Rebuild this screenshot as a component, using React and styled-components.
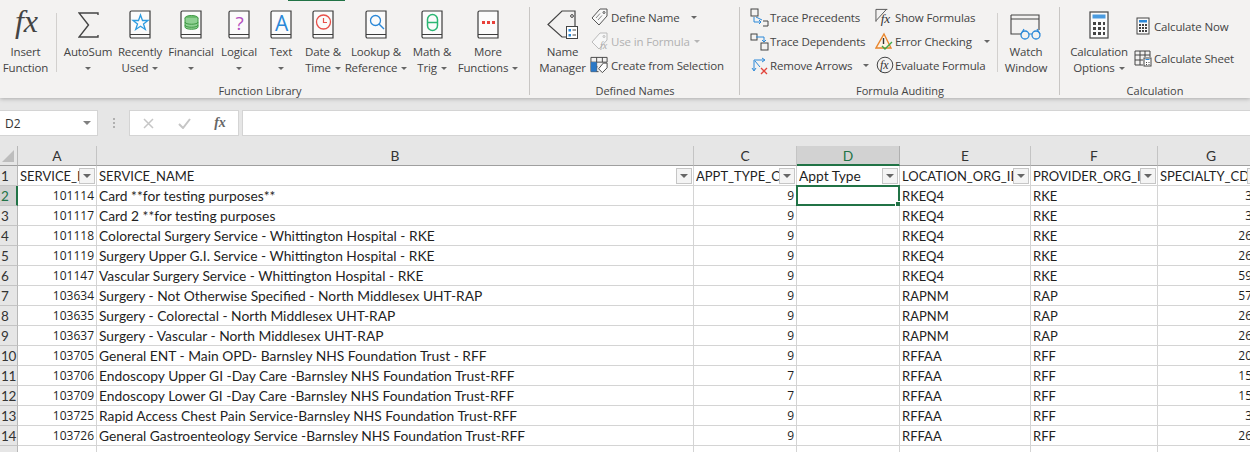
import React from 'react';
import styled, { createGlobalStyle } from 'styled-components';

const GlobalStyle = createGlobalStyle`
	html, body {
		margin: 0;
		padding: 0;
		height: 452px;
		overflow: hidden;
		background: #e6e6e6;
	}
`;

const uiFont = `'Open Sans', 'Noto Sans', 'Liberation Sans', sans-serif`;
const cellFont = `Lato, 'Open Sans', 'Liberation Sans', sans-serif`;

const columns = [
	{ name: 'A', width: 79, label: 'SERVICE_ID' },
	{ name: 'B', width: 597, label: 'SERVICE_NAME' },
	{ name: 'C', width: 103, label: 'APPT_TYPE_CD' },
	{ name: 'D', width: 103, label: 'Appt Type', selected: true },
	{ name: 'E', width: 131, label: 'LOCATION_ORG_ID' },
	{ name: 'F', width: 127, label: 'PROVIDER_ORG_ID' },
	{ name: 'G', width: 107, label: 'SPECIALTY_CD' },
];

const rows = [
	['101114', 'Card **for testing purposes**', '9', 'RKEQ4', 'RKE', '3'],
	['101117', 'Card 2 **for testing purposes', '9', 'RKEQ4', 'RKE', '3'],
	['101118', 'Colorectal Surgery Service - Whittington Hospital - RKE', '9', 'RKEQ4', 'RKE', '26'],
	['101119', 'Surgery Upper G.I. Service - Whittington Hospital - RKE', '9', 'RKEQ4', 'RKE', '26'],
	['101147', 'Vascular Surgery Service - Whittington Hospital - RKE', '9', 'RKEQ4', 'RKE', '59'],
	['103634', 'Surgery - Not Otherwise Specified - North Middlesex UHT-RAP', '9', 'RAPNM', 'RAP', '57'],
	['103635', 'Surgery - Colorectal - North Middlesex UHT-RAP', '9', 'RAPNM', 'RAP', '26'],
	['103637', 'Surgery - Vascular - North Middlesex UHT-RAP', '9', 'RAPNM', 'RAP', '26'],
	['103705', 'General ENT - Main OPD- Barnsley NHS Foundation Trust - RFF', '9', 'RFFAA', 'RFF', '20'],
	['103706', 'Endoscopy Upper GI -Day Care -Barnsley NHS Foundation Trust-RFF', '7', 'RFFAA', 'RFF', '15'],
	['103709', 'Endoscopy Lower GI -Day Care -Barnsley NHS Foundation Trust-RFF', '7', 'RFFAA', 'RFF', '15'],
	['103725', 'Rapid Access Chest Pain Service-Barnsley NHS Foundation Trust-RFF', '9', 'RFFAA', 'RFF', '3'],
	['103726', 'General Gastroenteology Service -Barnsley NHS Foundation Trust-RFF', '9', 'RFFAA', 'RFF', '26'],
];

const Page = styled.div`
	width: 1250px;
	height: 452px;
	overflow: hidden;
	background: #e6e6e6;
	font-family: ${uiFont};
`;

const Ribbon = styled.div`
	position: relative;
	display: flex;
	height: 98px;
	background: #f3f2f1;
	box-shadow: 0 1px 4px rgba(0, 0, 0, 0.25);
`;

const TabMark = styled.span`
	position: absolute;
	left: 288px;
	top: 0;
	width: 57px;
	height: 1px;
	background: #217346;
`;

const Group = styled.section`
	position: relative;
	display: flex;
	flex-direction: column;
	flex: none;
	width: ${(p) => p.$w}px;
	height: 95px;
	margin-top: 3px;
	box-sizing: border-box;
	&::after {
		content: '';
		display: ${(p) => (p.$last ? 'none' : 'block')};
		position: absolute;
		right: 0;
		top: 4px;
		bottom: 3px;
		width: 1px;
		background: #c8c6c4;
	}
`;

const GroupBody = styled.div`
	display: flex;
	height: 80px;
	padding-left: ${(p) => p.$pad || 0}px;
`;

const GroupLabel = styled.div`
	text-align: center;
	font-size: 11px;
	line-height: 15px;
	color: #444;
	padding-right: ${(p) => p.$shift || 0}px;
`;

const Big = styled.div`
	flex: none;
	width: ${(p) => p.$w}px;
	display: flex;
	flex-direction: column;
	align-items: center;
	color: #444;
	font-size: 11.5px;
	line-height: 16px;
	letter-spacing: -0.15px;
	text-align: center;
	white-space: nowrap;
`;

const BigIcon = styled.div`
	height: 36px;
	margin-bottom: 5px;
	display: flex;
	align-items: flex-end;
	justify-content: center;
	svg {
		margin-bottom: ${(p) => -(p.$drop || 0)}px;
	}
`;

const Caret = styled.i`
	display: inline-block;
	width: 0;
	height: 0;
	border-left: ${(p) => (p.$big ? 4 : 3)}px solid transparent;
	border-right: ${(p) => (p.$big ? 4 : 3)}px solid transparent;
	border-top: ${(p) => (p.$big ? 4 : 3)}px solid ${(p) => (p.$off ? '#b5b5b5' : p.$big ? '#808080' : '#666')};
	vertical-align: middle;
	margin-left: ${(p) => p.$gap ?? 4}px;
`;

const Divider = styled.div`
	flex: none;
	width: 1px;
	height: 59px;
	margin: 10px ${(p) => p.$right}px 0 ${(p) => p.$left}px;
	background: #d2d0ce;
`;

const SmallColumn = styled.div`
	flex: none;
	width: ${(p) => p.$w}px;
	display: flex;
	flex-direction: column;
	padding-top: ${(p) => p.$top ?? 2}px;
	padding-left: ${(p) => p.$left ?? 0}px;
	box-sizing: border-box;
	gap: ${(p) => p.$gap ?? 0}px;
`;

const SmallButton = styled.div`
	display: flex;
	align-items: center;
	height: 24px;
	gap: ${(p) => p.$gap ?? 1}px;
	font-size: 11.5px;
	letter-spacing: -0.15px;
	color: ${(p) => (p.$off ? '#b1b1b1' : '#444')};
	white-space: nowrap;
`;

const SmallIcon = styled.span`
	flex: none;
	display: flex;
	justify-content: center;
	width: 19px;
`;

const FormulaBar = styled.div`
	display: flex;
	align-items: center;
	height: 26px;
	margin-top: 12px;
`;

const NameBox = styled.div`
	flex: none;
	width: 98px;
	height: 26px;
	box-sizing: border-box;
	display: flex;
	align-items: center;
	justify-content: space-between;
	padding: 0 6px 0 5px;
	background: #fff;
	border: 1px solid #d4d4d4;
	border-left: none;
	font-size: 12px;
	color: #333;
`;

const Dots = styled.div`
	flex: none;
	width: 31px;
	display: flex;
	flex-direction: column;
	align-items: center;
	gap: 2px;
	span {
		width: 2px;
		height: 2px;
		background: #b0b0b0;
	}
`;

const BarButtons = styled.div`
	flex: none;
	width: 110px;
	height: 26px;
	box-sizing: border-box;
	display: flex;
	align-items: center;
	background: #fff;
	border: 1px solid #d4d4d4;
	margin-right: 3px;
`;

const BarSlot = styled.span`
	flex: 1;
	display: flex;
	justify-content: center;
	color: ${(p) => p.$color || '#c6c6c6'};
	font-family: 'Liberation Serif', serif;
	font-style: italic;
	font-weight: bold;
	font-size: 14px;
`;

const FormulaInput = styled.div`
	flex: 1;
	height: 26px;
	box-sizing: border-box;
	background: #fff;
	border: 1px solid #d4d4d4;
	border-right: none;
`;

const Sheet = styled.div`
	display: grid;
	grid-template-columns: 18px ${columns.map((c) => `${c.width}px`).join(' ')};
	grid-auto-rows: 20px;
	margin-top: 10px;
	background: #fff;
	font-family: ${cellFont};
	font-size: 13.8px;
	color: #1f1f1f;
`;

const Corner = styled.div`
	position: relative;
	background: #e6e6e6;
	border-right: 1px solid #b8b8b8;
	border-bottom: 1px solid #9f9f9f;
	box-sizing: border-box;
	&::after {
		content: '';
		position: absolute;
		right: 3px;
		bottom: 3px;
		border-style: solid;
		border-width: 0 0 12px 12px;
		border-color: transparent transparent #bdbdbd transparent;
	}
`;

const ColHead = styled.div`
	display: flex;
	align-items: center;
	justify-content: center;
	box-sizing: border-box;
	background: ${(p) => (p.$on ? '#d2d2d2' : '#e6e6e6')};
	color: ${(p) => (p.$on ? '#217346' : '#333')};
	border-right: 1px solid ${(p) => (p.$on ? '#b0b0b0' : '#c4c4c4')};
	border-bottom: ${(p) => (p.$on ? '2px solid #217346' : '1px solid #9f9f9f')};
`;

const RowHead = styled.div`
	display: flex;
	align-items: center;
	padding: 1px 0 0 1px;
	box-sizing: border-box;
	font-size: 13.5px;
	letter-spacing: -0.3px;
	background: ${(p) => (p.$on ? '#d2d2d2' : '#e6e6e6')};
	color: ${(p) => (p.$on ? '#217346' : '#333')};
	border-right: ${(p) => (p.$on ? '2px solid #217346' : '1px solid #b8b8b8')};
	border-bottom: 1px solid #c4c4c4;
`;

const Cell = styled.div`
	position: relative;
	display: flex;
	align-items: center;
	justify-content: ${(p) => (p.$num ? 'flex-end' : 'flex-start')};
	box-sizing: border-box;
	padding: 0 ${(p) => p.$inset ?? 2}px 0 2px;
	white-space: nowrap;
	font-family: ${(p) => (p.$num ? uiFont : 'inherit')};
	font-size: ${(p) => (p.$num ? '12px' : p.$caps ? '13px' : 'inherit')};
	border-right: 1px solid #d4d4d4;
	border-bottom: 1px solid #d4d4d4;
`;

const HeaderText = styled.span`
	display: block;
	overflow: hidden;
	flex: 1;
	min-width: 0;
`;

const FilterBtn = styled.span`
	flex: none;
	width: 16px;
	height: 16px;
	box-sizing: border-box;
	display: flex;
	align-items: center;
	justify-content: center;
	margin-right: -1px;
	background: #f4f4f4;
	border: 1px solid #c6c6c6;
	&::after {
		content: '';
		border-left: 4px solid transparent;
		border-right: 4px solid transparent;
		border-top: 4px solid #666;
	}
`;

const Selection = styled.div`
	position: absolute;
	left: -1px;
	top: -1px;
	right: -1px;
	bottom: -1px;
	border: 2px solid #217346;
	pointer-events: none;
	&::after {
		content: '';
		position: absolute;
		right: -3px;
		bottom: -3px;
		width: 4px;
		height: 4px;
		background: #217346;
		border: 1px solid #fff;
	}
`;

const Book = ({ children }) => (
	<svg width="22" height="29" viewBox="0 0 22 29" fill="none">
		<path d="M2.500 1h18.500v27H2.500A1.500 1.500 0 0 1 1 26.500V2.500A1.500 1.500 0 0 1 2.500 1z" fill="#fbfbfb" stroke="#3c3c3c" strokeWidth="1.200" />
		<path d="M1 24.500h20" stroke="#3c3c3c" strokeWidth="1" />
		{children}
	</svg>
);

const FxIcon = () => (
	<svg width="34" height="30" viewBox="0 0 34 30">
		<text x="6" y="23" fontFamily="'Liberation Serif', serif" fontStyle="italic" fontSize="32" fill="#444">fx</text>
	</svg>
);

const SigmaIcon = () => (
	<svg width="21" height="27" viewBox="0 0 21 27" fill="none">
		<path d="M20 3V1H1l9.500 12L1 25h19v-2" stroke="#444" strokeWidth="1.400" />
	</svg>
);

const NameTag = () => (
	<svg width="31" height="29" viewBox="0 0 31 29" fill="none">
		<path d="M19 27h-4L1 14.500 15 1h13v15" stroke="#444" strokeWidth="1.200" />
		<circle cx="25" cy="6" r="1.400" stroke="#444" />
		<rect x="19.500" y="16.500" width="11" height="12" fill="#fff" stroke="#444" />
		<path d="M21.500 19h2.500v2.500h-2.500zM21.500 24h2.500v2.500h-2.500z" fill="#2b88d8" />
		<path d="M25.500 20h3.500M25.500 25h3.500" stroke="#444" />
	</svg>
);

const TagSmall = ({ off }) => (
	<svg width="18" height="18" viewBox="0 0 18 18" fill="none">
		<path d="M1 10L9 1h7v7l-8 9z" stroke={off ? '#bbb' : '#555'} fill="#f7f7f7" />
		<circle cx="13" cy="4.500" r="1" stroke={off ? '#bbb' : '#555'} />
		{off ? (
			<text x="9" y="17" fontFamily="'Liberation Serif', serif" fontStyle="italic" fontSize="10" fill="#aaa">fx</text>
		) : (
			<path d="M5 10l4-4.500M7 12l4-4.500" stroke="#888" />
		)}
	</svg>
);

const CreateSel = () => (
	<svg width="20" height="18" viewBox="0 0 20 18" fill="none">
		<path d="M1 1h17v5M1 1v15h8M1 6h17M7 1v15M13 1v5M1 11h7" stroke="#444" />
		<rect x="1" y="6" width="6" height="10" fill="#2b78c6" />
		<path d="M9 13l5-6h4v5l-5 5z" fill="#fff" stroke="#444" />
	</svg>
);

const TraceIcon = ({ dep }) => (
	<svg width="19" height="19" viewBox="0 0 19 19" fill="none">
		{dep ? (
			<>
				<rect x="1" y="2" width="6" height="6" stroke="#444" />
				<rect x="11" y="11" width="7" height="7" stroke="#444" />
				<path d="M6 5h8v5" stroke="#2b88d8" />
				<path d="M12 8l2 2 2-2" stroke="#2b88d8" />
			</>
		) : (
			<>
				<rect x="1" y="1" width="7" height="7" stroke="#444" />
				<path d="M13 13h5v5h-5" stroke="#444" />
				<path d="M4 9v5h7" stroke="#2b88d8" />
				<path d="M9 12l2 2-2 2M6 9l6 3" stroke="#2b88d8" />
			</>
		)}
	</svg>
);

const RemoveIcon = () => (
	<svg width="19" height="19" viewBox="0 0 19 19" fill="none">
		<path d="M4 14V4h10M12 2l3 2-3 2M2 12l2 3 2-3M5 5l5 6" stroke="#2b88d8" />
		<path d="M11 12l6 6M17 12l-6 6" stroke="#e2453c" strokeWidth="1.300" />
	</svg>
);

const ShowFx = () => (
	<svg width="20" height="20" viewBox="0 0 20 20" fill="none">
		<path d="M1 2h12M1 2v13M1 14L12 2" stroke="#555" />
		<text x="6" y="16" fontFamily="'Liberation Serif', serif" fontStyle="italic" fontSize="14" fill="#333">fx</text>
	</svg>
);

const ErrorIcon = () => (
	<svg width="19" height="19" viewBox="0 0 19 19" fill="none">
		<path d="M9 2l7 14H1z" stroke="#e8862e" strokeWidth="1.400" fill="#fdf3e6" />
		<path d="M8.500 6v6" stroke="#333" strokeWidth="1.400" />
		<path d="M7 14l3 3 7-7" stroke="#3fa648" strokeWidth="1.400" />
	</svg>
);

const EvalIcon = () => (
	<svg width="18" height="18" viewBox="0 0 18 18" fill="none">
		<circle cx="9" cy="9" r="7.800" stroke="#444" />
		<text x="4" y="13" fontFamily="'Liberation Serif', serif" fontStyle="italic" fontSize="12" fill="#333">fx</text>
	</svg>
);

const WatchIcon = () => (
	<svg width="32" height="27" viewBox="0 0 32 27" fill="none">
		<path d="M1 1h28v15M1 1v19h12M1 5h28" stroke="#444" strokeWidth="1.100" />
		<circle cx="15" cy="21" r="4" fill="#f3f2f1" stroke="#2b88d8" strokeWidth="1.300" />
		<circle cx="26" cy="21" r="4" fill="#f3f2f1" stroke="#2b88d8" strokeWidth="1.300" />
		<path d="M19 20h3M11 20l3-5M30 20l-3-5" stroke="#2b88d8" strokeWidth="1.200" />
	</svg>
);

const CalcBig = () => (
	<svg width="20" height="28" viewBox="0 0 20 28" fill="none">
		<rect x="1" y="1" width="18" height="26" fill="#fbfbfb" stroke="#444" strokeWidth="1.200" />
		<rect x="3.500" y="3.500" width="13" height="4" fill="#4a9be0" />
		<path d="M4 11h3v3H4zM9 11h3v3H9zM14 11h2v3h-2zM4 16h3v3H4zM9 16h3v3H9zM14 16h2v3h-2zM4 21h3v3H4zM9 21h3v3H9zM14 21h2v3h-2z" fill="#444" />
	</svg>
);

const CalcSmall = () => (
	<svg width="14" height="18" viewBox="0 0 14 18" fill="none">
		<rect x="1" y="1" width="12" height="16" fill="#fbfbfb" stroke="#444" />
		<rect x="3" y="3" width="8" height="2.500" fill="#2b88d8" />
		<path d="M3 7h2v2H3zM6 7h2v2H6zM9 7h2v2H9zM3 10h2v2H3zM6 10h2v2H6zM9 10h2v2H9zM3 13h2v2H3zM6 13h2v2H6zM9 13h2v2H9z" fill="#444" />
	</svg>
);

const CalcSheet = () => (
	<svg width="18" height="17" viewBox="0 0 18 17" fill="none">
		<path d="M1 1h15v6M1 1v14h8M1 5h15M6 1v14M11 1v6M1 10h8" stroke="#444" />
		<rect x="10" y="8" width="7" height="8" fill="#fff" stroke="#444" />
		<path d="M11.500 9.500h4" stroke="#2b88d8" />
		<path d="M12 12h1v1h-1zM14.500 12h1v1h-1zM12 14h1v1h-1zM14.500 14h1v1h-1z" fill="#444" />
	</svg>
);

const libraryButtons = [
	{ w: 54, lines: ['AutoSum', ''], icon: <SigmaIcon /> },
	{
		w: 50,
		lines: ['Recently', 'Used'],
		icon: (
			<Book>
				<path d="M11.500 5l2 5.500h5.500l-4.500 3.500 1.800 5.500-4.800-3.300-4.800 3.300 1.800-5.500L4 10.500h5.500z" stroke="#2b9be0" strokeWidth="1.300" />
			</Book>
		),
	},
	{
		w: 52,
		lines: ['Financial', ''],
		icon: (
			<Book>
				<ellipse cx="11.500" cy="8" rx="6.500" ry="2.500" fill="#6bbd6e" stroke="#3f9a45" />
				<path d="M5 8v9c0 3 13 3 13 0V8M5 12c0 3 13 3 13 0M5 15c0 3 13 3 13 0" fill="#8fd093" stroke="#3f9a45" />
			</Book>
		),
	},
	{
		w: 44,
		lines: ['Logical', ''],
		icon: (
			<Book>
				<text x="11.500" y="20" textAnchor="middle" fontFamily="'Open Sans', sans-serif" fontSize="19" fill="#b44fc0">?</text>
			</Book>
		),
	},
	{
		w: 40,
		lines: ['Text', ''],
		icon: (
			<Book>
				<text x="11.500" y="21" textAnchor="middle" fontFamily="'Open Sans', sans-serif" fontSize="21" fill="#2b88d8">A</text>
			</Book>
		),
	},
	{
		w: 44,
		lines: ['Date &', 'Time'],
		icon: (
			<Book>
				<circle cx="11.500" cy="12" r="7" stroke="#e8504a" strokeWidth="1.300" />
				<path d="M11.500 8v4.500H15" stroke="#e8504a" strokeWidth="1.200" />
			</Book>
		),
	},
	{
		w: 62,
		lines: ['Lookup &', 'Reference'],
		icon: (
			<Book>
				<circle cx="10.500" cy="10.500" r="5" stroke="#2b88d8" strokeWidth="1.300" />
				<path d="M14 14l5 5" stroke="#2b88d8" strokeWidth="1.400" />
			</Book>
		),
	},
	{
		w: 50,
		lines: ['Math &', 'Trig'],
		icon: (
			<Book>
				<rect x="6.500" y="4.500" width="10" height="16" rx="5" stroke="#2bb673" strokeWidth="1.500" />
				<path d="M6.500 12.500h10" stroke="#2bb673" strokeWidth="1.500" />
			</Book>
		),
	},
	{
		w: 62,
		lines: ['More', 'Functions'],
		icon: (
			<Book>
				<path d="M5 11h3v3H5zM10 11h3v3h-3zM15 11h3v3h-3z" fill="#e8403a" />
			</Book>
		),
	},
];

const BigButton = ({ w, icon, lines, drop, caret = true }) => (
	<Big $w={w}>
		<BigIcon $drop={drop}>{icon}</BigIcon>
		<div>{lines[0]}</div>
		<div>
			{lines[1]}
			{caret && <Caret $gap={lines[1] ? 4 : 0} />}
		</div>
	</Big>
);

const App = () => (
	<Page>
		<GlobalStyle />
		<Ribbon>
			<TabMark />
			<Group $w={530}>
				<GroupBody>
					<BigButton w={51} icon={<FxIcon />} lines={['Insert', 'Function']} caret={false} />
					<Divider $left={5} $right={4} />
					{libraryButtons.map((b) => (
						<BigButton key={b.lines[0]} {...b} />
					))}
				</GroupBody>
				<GroupLabel $shift={10}>Function Library</GroupLabel>
			</Group>
			<Group $w={210}>
				<GroupBody $pad={5}>
					<BigButton w={55} icon={<NameTag />} lines={['Name', 'Manager']} caret={false} />
					<SmallColumn $w={148}>
						<SmallButton $gap={2}>
							<SmallIcon><TagSmall /></SmallIcon>
							Define Name
							<Caret $gap={9} />
						</SmallButton>
						<SmallButton $off $gap={2}>
							<SmallIcon><TagSmall off /></SmallIcon>
							Use in Formula
							<Caret $off $gap={2} />
						</SmallButton>
						<SmallButton $gap={2}>
							<SmallIcon><CreateSel /></SmallIcon>
							Create from Selection
						</SmallButton>
					</SmallColumn>
				</GroupBody>
				<GroupLabel>Defined Names</GroupLabel>
			</Group>
			<Group $w={320}>
				<GroupBody $pad={10}>
					<SmallColumn $w={125}>
						<SmallButton>
							<SmallIcon><TraceIcon /></SmallIcon>
							Trace Precedents
						</SmallButton>
						<SmallButton>
							<SmallIcon><TraceIcon dep /></SmallIcon>
							Trace Dependents
						</SmallButton>
						<SmallButton>
							<SmallIcon><RemoveIcon /></SmallIcon>
							Remove Arrows
							<Caret $gap={10} />
						</SmallButton>
					</SmallColumn>
					<SmallColumn $w={122}>
						<SmallButton>
							<SmallIcon><ShowFx /></SmallIcon>
							Show Formulas
						</SmallButton>
						<SmallButton>
							<SmallIcon><ErrorIcon /></SmallIcon>
							Error Checking
							<Caret $gap={11} />
						</SmallButton>
						<SmallButton>
							<SmallIcon><EvalIcon /></SmallIcon>
							Evaluate Formula
						</SmallButton>
					</SmallColumn>
					<Divider $left={0} $right={5} />
					<BigButton w={46} drop={2} icon={<WatchIcon />} lines={['Watch', 'Window']} caret={false} />
				</GroupBody>
				<GroupLabel>Formula Auditing</GroupLabel>
			</Group>
			<Group $w={190} $last>
				<GroupBody $pad={6}>
					<BigButton w={66} icon={<CalcBig />} lines={['Calculation', 'Options']} />
					<SmallColumn $w={116} $top={11} $left={1} $gap={8}>
						<SmallButton $gap={2}>
							<SmallIcon><CalcSmall /></SmallIcon>
							Calculate Now
						</SmallButton>
						<SmallButton $gap={2}>
							<SmallIcon><CalcSheet /></SmallIcon>
							Calculate Sheet
						</SmallButton>
					</SmallColumn>
				</GroupBody>
				<GroupLabel>Calculation</GroupLabel>
			</Group>
		</Ribbon>
		<FormulaBar>
			<NameBox>
				D2
				<Caret $big $gap={0} />
			</NameBox>
			<Dots>
				<span />
				<span />
				<span />
			</Dots>
			<BarButtons>
				<BarSlot>
					<svg width="11" height="11" viewBox="0 0 11 11"><path d="M1 1l9 9M10 1l-9 9" stroke="#c6c6c6" strokeWidth="1.500" /></svg>
				</BarSlot>
				<BarSlot>
					<svg width="13" height="11" viewBox="0 0 13 11" fill="none"><path d="M1 6l4 4 7-9" stroke="#c6c6c6" strokeWidth="2" /></svg>
				</BarSlot>
				<BarSlot $color="#666">fx</BarSlot>
			</BarButtons>
			<FormulaInput />
		</FormulaBar>
		<Sheet>
			<Corner />
			{columns.map((c) => (
				<ColHead key={c.name} $on={c.selected}>{c.name}</ColHead>
			))}
			<RowHead>1</RowHead>
			{columns.map((c) => (
				<Cell key={c.label} $caps={!c.selected}>
					<HeaderText>{c.label}</HeaderText>
					<FilterBtn />
				</Cell>
			))}
			{rows.map((r, i) => (
				<React.Fragment key={r[0]}>
					<RowHead $on={i === 0}>{i + 2}</RowHead>
					<Cell $num>{r[0]}</Cell>
					<Cell>{r[1]}</Cell>
					<Cell $num>{r[2]}</Cell>
					<Cell>{i === 0 && <Selection />}</Cell>
					<Cell $caps>{r[3]}</Cell>
					<Cell $caps>{r[4]}</Cell>
					<Cell $num $inset={12}>{r[5]}</Cell>
				</React.Fragment>
			))}
			<RowHead />
			{columns.map((c) => (
				<Cell key={`blank-${c.name}`} />
			))}
		</Sheet>
	</Page>
);

export default App;
